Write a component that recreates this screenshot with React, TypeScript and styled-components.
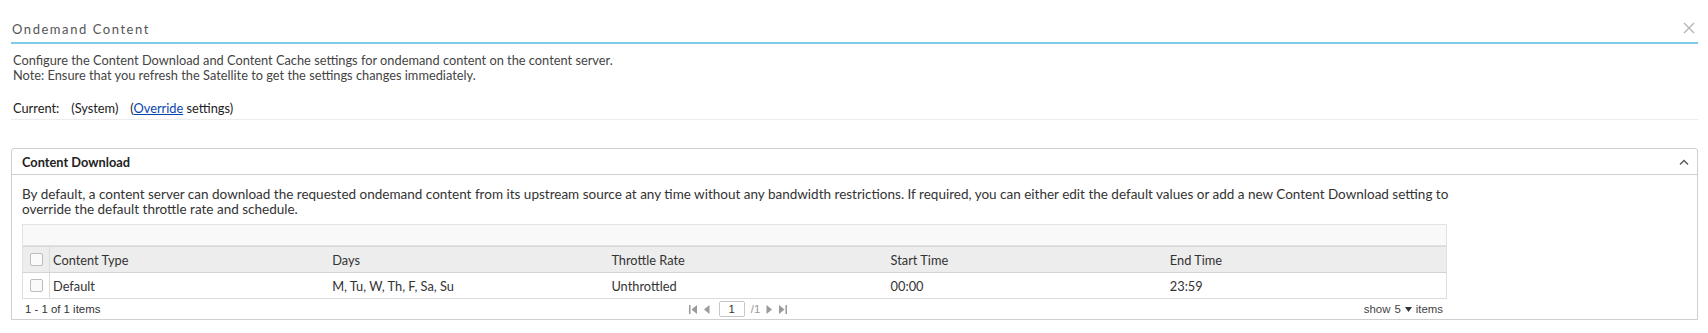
import styled, { createGlobalStyle } from 'styled-components';

const GlobalStyle = createGlobalStyle`
  html, body {
    margin: 0;
    padding: 0;
    background: #fff;
  }
  body {
    font-family: 'Lato', 'Liberation Sans', sans-serif;
    font-size: 12.8px;
    color: #333;
  }
`;

const Page = styled.div`
  padding: 0 10px 0 11px;
`;

const TitleBar = styled.div`
  display: flex;
  align-items: center;
  justify-content: space-between;
  height: 42px;
  padding-left: 1px;
  border-bottom: 2px solid #7fcaeb;
`;

const Title = styled.h1`
  margin: 16px 0 0;
  font-size: 13px;
  font-weight: normal;
  letter-spacing: 1.55px;
  color: #555;
`;

const CloseButton = styled.button`
  display: flex;
  align-items: center;
  border: 0;
  background: none;
  padding: 0;
  margin: 14px 3px 0 0;
  color: #b5b5b5;
  cursor: pointer;
`;

const Intro = styled.p`
  margin: 9px 0 0 2px;
  line-height: 15px;
  color: #444;
`;

const CurrentRow = styled.div`
  display: flex;
  gap: 12px;
  padding: 9px 0 3px 2px;
  margin-top: 8px;
  border-bottom: 1px solid #ececec;
  color: #222;
`;

const OverrideLink = styled.a`
  color: #0645ad;
  text-decoration: underline;
`;

const Panel = styled.section`
  margin-top: 28px;
  border: 1px solid #cfcfcf;
  border-radius: 3px 3px 0 0;
`;

const PanelHeader = styled.div`
  display: flex;
  align-items: center;
  justify-content: space-between;
  height: 25px;
  padding: 0 8px 0 10px;
  border-bottom: 1px solid #d0d0d0;
  font-weight: bold;
  color: #222;
`;

const PanelBody = styled.div`
  padding: 12px 10px 0;
`;

const BodyText = styled.p`
  margin: 0;
  max-width: 1440px;
  font-size: 13.5px;
  line-height: 15px;
  color: #333;
`;

const Grid = styled.div`
  width: 1425px;
  margin-top: 7px;
`;

const GridToolbar = styled.div`
  height: 20px;
  background: #f9f9f9;
  border: 1px solid #e3e3e3;
`;

const Row = styled.div<{ $head?: boolean }>`
  display: grid;
  grid-template-columns: 27px repeat(5, 1fr);
  height: 25px;
  align-items: center;
  background: ${(p) => (p.$head ? '#ededed' : '#fff')};
  border: 1px solid #e0e0e0;
  border-top: ${(p) => (p.$head ? '1px solid #d8d8d8' : '0')};
  border-bottom: 1px solid ${(p) => (p.$head ? '#d4d4d4' : '#dcdcdc')};
  color: #333;
`;

const CheckCell = styled.div`
  display: flex;
  align-items: center;
  justify-content: center;
  height: 100%;
  border-right: 1px solid #dcdcdc;
`;

const Check = styled.span`
  width: 11px;
  height: 11px;
  border: 1px solid #bdbdbd;
  border-radius: 2px;
  background: #fafafa;
`;

const Cell = styled.div`
  padding-left: 3px;
  white-space: nowrap;
`;

const GridFooter = styled.div`
  display: grid;
  grid-template-columns: 1fr auto 1fr;
  align-items: center;
  height: 20px;
  padding: 0 4px 0 3px;
  font-family: 'Liberation Sans', sans-serif;
  font-size: 11.4px;
  color: #333;
`;

const Pager = styled.div`
  display: flex;
  align-items: center;
  gap: 6px;
  margin-left: 8px;
  color: #999;
`;

const PageInput = styled.span`
  display: inline-flex;
  align-items: center;
  justify-content: center;
  width: 24px;
  height: 14px;
  margin-left: 3px;
  border: 1px solid #c8c8c8;
  border-radius: 2px;
  color: #333;
`;

const PageSize = styled.div`
  display: flex;
  align-items: center;
  justify-content: flex-end;
  gap: 4px;
  color: #444;
`;

const Icon = styled.svg`
  display: block;
`;

const columns = ['Content Type', 'Days', 'Throttle Rate', 'Start Time', 'End Time'];
const rows = [['Default', 'M, Tu, W, Th, F, Sa, Su', 'Unthrottled', '00:00', '23:59']];

const PagerArrow = ({ dir, end }: { dir: 'l' | 'r'; end?: boolean }) => (
  <Icon width={end ? 9 : 6} height="9" viewBox={end ? '0 0 9 9' : '0 0 6 9'} fill="#9a9a9a">
    {dir === 'l' ? (
      end ? (
        <>
          <rect x="0" y="0" width="1.5" height="9" />
          <path d="M8 0 L2.5 4.5 L8 9 Z" />
        </>
      ) : (
        <path d="M5.5 0 L0 4.5 L5.5 9 Z" />
      )
    ) : end ? (
      <>
        <path d="M1 0 L6.5 4.5 L1 9 Z" />
        <rect x="7.5" y="0" width="1.5" height="9" />
      </>
    ) : (
      <path d="M0.5 0 L6 4.5 L0.5 9 Z" />
    )}
  </Icon>
);

export default function App() {
  return (
    <>
      <GlobalStyle />
      <Page>
        <TitleBar>
          <Title>Ondemand Content</Title>
          <CloseButton aria-label="Close">
            <Icon width="12" height="12" viewBox="0 0 12 12">
              <path d="M1 1 L11 11 M11 1 L1 11" stroke="currentColor" strokeWidth="1.4" />
            </Icon>
          </CloseButton>
        </TitleBar>
        <Intro>
          Configure the Content Download and Content Cache settings for ondemand content on the content server.
          <br />
          Note: Ensure that you refresh the Satellite to get the settings changes immediately.
        </Intro>
        <CurrentRow>
          <span>Current:</span>
          <span>(System)</span>
          <span>
            (<OverrideLink href="#">Override</OverrideLink> settings)
          </span>
        </CurrentRow>
        <Panel>
          <PanelHeader>
            <span>Content Download</span>
            <Icon width="10" height="6" viewBox="0 0 10 6">
              <path d="M1 5.5 L5 1.5 L9 5.5" fill="none" stroke="#555" strokeWidth="1.3" />
            </Icon>
          </PanelHeader>
          <PanelBody>
            <BodyText>
              By default, a content server can download the requested ondemand content from its upstream source at any
              time without any bandwidth restrictions. If required, you can either edit the default values or add a new
              Content Download setting to override the default throttle rate and schedule.
            </BodyText>
            <Grid>
              <GridToolbar />
              <Row $head>
                <CheckCell>
                  <Check />
                </CheckCell>
                {columns.map((c) => (
                  <Cell key={c}>{c}</Cell>
                ))}
              </Row>
              {rows.map((r) => (
                <Row key={r[0]}>
                  <CheckCell>
                    <Check />
                  </CheckCell>
                  {r.map((v, i) => (
                    <Cell key={i}>{v}</Cell>
                  ))}
                </Row>
              ))}
              <GridFooter>
                <span>1 - 1 of 1 items</span>
                <Pager>
                  <PagerArrow dir="l" end />
                  <PagerArrow dir="l" />
                  <PageInput>1</PageInput>
                  <span>/1</span>
                  <PagerArrow dir="r" />
                  <PagerArrow dir="r" end />
                </Pager>
                <PageSize>
                  <span>show</span>
                  <span>5</span>
                  <Icon width="7" height="5" viewBox="0 0 7 5">
                    <path d="M0 0 L7 0 L3.5 5 Z" fill="#333" />
                  </Icon>
                  <span>items</span>
                </PageSize>
              </GridFooter>
            </Grid>
          </PanelBody>
        </Panel>
      </Page>
    </>
  );
}
